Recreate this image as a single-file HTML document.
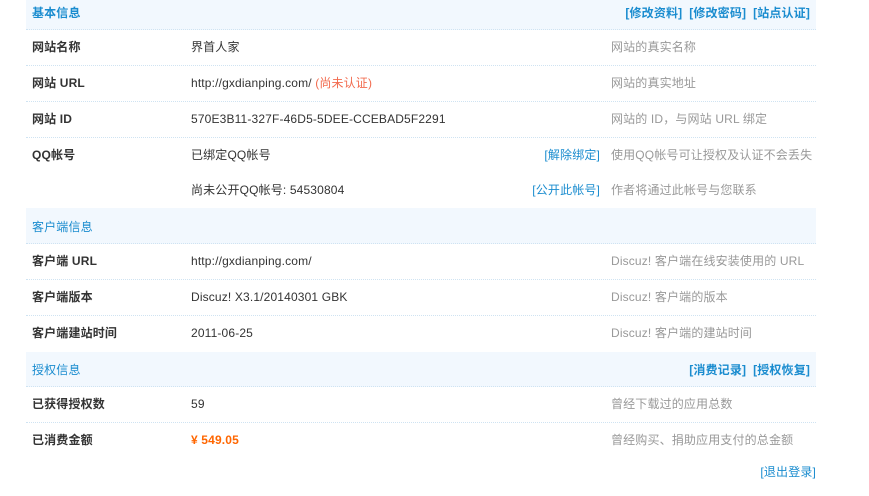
<!DOCTYPE html>
<html><head><meta charset="utf-8"><style>
*{margin:0;padding:0;box-sizing:border-box}
body{width:869px;height:496px;background:#fff;font-family:"Liberation Sans","Noto Sans CJK SC",sans-serif;font-size:12px;color:#333;position:relative;overflow:hidden;letter-spacing:0.15px}
.r{position:absolute;left:26px;width:790px}
.b{border-bottom:1px dotted #cfe3f2}
.h{background:#f2f8fe}
.t{position:absolute;white-space:nowrap;line-height:16px;margin-top:1px}
.l{left:6px;font-weight:bold}
.v{left:165px}
.d{left:585px;color:#999}
.blue{color:#1a8ccf}
.hd{left:6px;font-weight:bold;color:#1a8ccf}
.rt{right:6px;font-weight:bold;color:#1a8ccf}
</style></head><body>
<div class="r h b" style="top:0;height:30px"><span class="t hd" style="top:4px">基本信息</span><span class="t rt" style="top:4px">[修改资料]&nbsp; [修改密码]&nbsp; [站点认证]</span></div>
<div class="r b" style="top:30px;height:36px"><span class="t l" style="top:8px">网站名称</span><span class="t v" style="top:8px">界首人家</span><span class="t d" style="top:8px">网站的真实名称</span></div>
<div class="r b" style="top:66px;height:36px"><span class="t l" style="top:8px">网站 URL</span><span class="t v" style="top:8px">http://gxdianping.com/ <span style="color:#f26c4f">(尚未认证)</span></span><span class="t d" style="top:8px">网站的真实地址</span></div>
<div class="r b" style="top:102px;height:36px"><span class="t l" style="top:8px">网站 ID</span><span class="t v" style="top:8px">570E3B11-327F-46D5-5DEE-CCEBAD5F2291</span><span class="t d" style="top:8px">网站的 ID，与网站 URL 绑定</span></div>
<div class="r" style="top:138px;height:36px"><span class="t l" style="top:8px">QQ帐号</span><span class="t v" style="top:8px">已绑定QQ帐号</span><span class="t blue" style="top:8px;right:216px">[解除绑定]</span><span class="t d" style="top:8px">使用QQ帐号可让授权及认证不会丢失</span></div>
<div class="r" style="top:174px;height:34px"><span class="t v" style="top:7px">尚未公开QQ帐号: 54530804</span><span class="t blue" style="top:7px;right:216px">[公开此帐号]</span><span class="t d" style="top:7px">作者将通过此帐号与您联系</span></div>
<div class="r h b" style="top:208px;height:36px"><span class="t hd" style="top:10px;font-weight:normal">客户端信息</span></div>
<div class="r b" style="top:244px;height:36px"><span class="t l" style="top:8px">客户端 URL</span><span class="t v" style="top:8px">http://gxdianping.com/</span><span class="t d" style="top:8px">Discuz! 客户端在线安装使用的 URL</span></div>
<div class="r b" style="top:280px;height:36px"><span class="t l" style="top:8px">客户端版本</span><span class="t v" style="top:8px">Discuz! X3.1/20140301 GBK</span><span class="t d" style="top:8px">Discuz! 客户端的版本</span></div>
<div class="r" style="top:316px;height:36px"><span class="t l" style="top:8px">客户端建站时间</span><span class="t v" style="top:8px">2011-06-25</span><span class="t d" style="top:8px">Discuz! 客户端的建站时间</span></div>
<div class="r h b" style="top:352px;height:35px"><span class="t hd" style="top:9px;font-weight:normal">授权信息</span><span class="t rt" style="top:9px">[消费记录]&nbsp; [授权恢复]</span></div>
<div class="r b" style="top:387px;height:36px"><span class="t l" style="top:8px">已获得授权数</span><span class="t v" style="top:8px">59</span><span class="t d" style="top:8px">曾经下载过的应用总数</span></div>
<div class="r" style="top:423px;height:36px"><span class="t l" style="top:8px">已消费金额</span><span class="t v" style="top:8px;color:#f60;font-weight:bold">¥ 549.05</span><span class="t d" style="top:8px">曾经购买、捐助应用支付的总金额</span></div>
<span class="t blue" style="top:463px;right:53px">[退出登录]</span>
</body></html>
